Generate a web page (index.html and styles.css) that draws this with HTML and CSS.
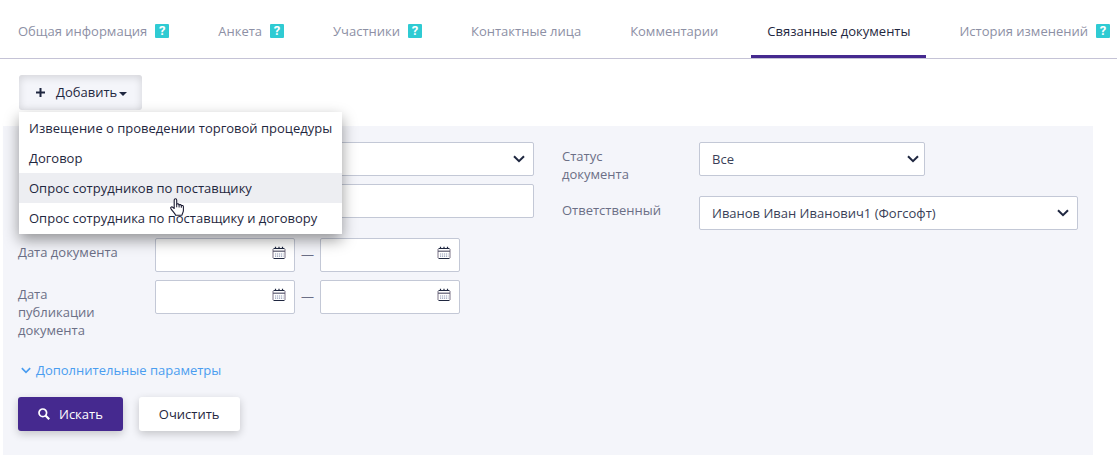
FILE: index.html
```html
<!DOCTYPE html>
<html lang="ru">
<head>
    <meta charset="UTF-8">
    <meta name="viewport" content="width=device-width, initial-scale=1.0">
    <title>Связанные документы</title>
    <link rel="stylesheet" href="styles.css">
</head>
<body>

    <!-- Shared icons -->
    <svg class="sprite" aria-hidden="true">
        <symbol id="chevron" viewBox="0 0 12 8">
            <path d="M1 1.2 L6 6.2 L11 1.2" fill="none" stroke="currentColor" stroke-width="2"/>
        </symbol>
        <symbol id="calendar" viewBox="0 0 14 14">
            <path d="M1 3V12M13 3V12" stroke="#7d7488" stroke-width="1"/>
            <path d="M1.5 2.5H12.5M1.5 12.5H12.5" stroke="#1f2740" stroke-width="1.2"/>
            <path d="M1 5.2H13" stroke="#5b5a70" stroke-width="1.2"/>
            <path d="M3.5 0.8V3M7 0.8V3M10.5 0.8V3" stroke="#1f2740" stroke-width="1.2"/>
            <path d="M3 8H11.5M3 10.2H11.5" stroke="#8f9ab5" stroke-width="1.2" stroke-dasharray="1.2 0.8"/>
        </symbol>
    </svg>

    <nav class="tabs">
        <a href="#" class="tab">Общая информация <span class="help">?</span></a>
        <a href="#" class="tab">Анкета <span class="help">?</span></a>
        <a href="#" class="tab">Участники <span class="help">?</span></a>
        <a href="#" class="tab">Контактные лица</a>
        <a href="#" class="tab">Комментарии</a>
        <a href="#" class="tab active">Связанные документы</a>
        <a href="#" class="tab">История изменений <span class="help">?</span></a>
    </nav>

    <div class="toolbar">
        <div class="dropdown">
            <button type="button" class="btn btn-add" aria-expanded="true">
                <svg class="plus" viewBox="0 0 9 9"><path d="M4.5 0V9M0 4.5H9" stroke="currentColor" stroke-width="2"/></svg>
                <span>Добавить</span>
                <span class="caret"></span>
            </button>
            <ul class="menu">
                <li><a href="#">Извещение о проведении торговой процедуры</a></li>
                <li><a href="#">Договор</a></li>
                <li><a href="#" class="hovered">Опрос сотрудников по поставщику</a></li>
                <li><a href="#">Опрос сотрудника по поставщику и договору</a></li>
            </ul>
            <svg class="pointer" viewBox="0 0 14 18" aria-hidden="true">
                <path d="M4.2 10.5V2.2C4.2 0.3 6.7 0.3 6.7 2.2V6.3C7.2 5.5 9 5.7 9.1 7C9.8 6.2 11.2 6.6 11.3 7.7C12.2 7.1 13.4 7.6 13.4 8.8V12.5C13.4 14.5 12.2 15.3 12 17.3H5.6C5.3 15.6 2.6 13.4 0.9 10.6C0.2 9.3 1.6 8.3 2.7 9.2Z" fill="#fff" stroke="#1c1c33" stroke-width="1.1" stroke-linejoin="round"/>
                <path d="M6.7 6V9.3M9.1 7V9.5M11.3 7.7V9.8" stroke="#1c1c33" stroke-width="1"/>
            </svg>
        </div>
    </div>

    <form class="filter" action="#" method="get">
        <div class="columns">
            <div class="column">
                <div class="row">
                    <div class="select field">
                        <select name="docType" aria-label="Тип документа"><option value=""></option></select>
                        <svg><use href="#chevron"/></svg>
                    </div>
                </div>
                <div class="row row-tall">
                    <input type="text" class="field" name="docNumber" aria-label="Номер документа">
                </div>
                <div class="row">
                    <label for="docDateFrom">Дата документа</label>
                    <div class="period field">
                        <div class="date">
                            <input type="text" id="docDateFrom" name="docDateFrom">
                            <svg><use href="#calendar"/></svg>
                        </div>
                        <span class="dash">—</span>
                        <div class="date">
                            <input type="text" name="docDateTo" aria-label="Дата документа по">
                            <svg><use href="#calendar"/></svg>
                        </div>
                    </div>
                </div>
                <div class="row">
                    <label for="pubDateFrom">Дата публикации документа</label>
                    <div class="period field">
                        <div class="date">
                            <input type="text" id="pubDateFrom" name="pubDateFrom">
                            <svg><use href="#calendar"/></svg>
                        </div>
                        <span class="dash">—</span>
                        <div class="date">
                            <input type="text" name="pubDateTo" aria-label="Дата публикации документа по">
                            <svg><use href="#calendar"/></svg>
                        </div>
                    </div>
                </div>
            </div>

            <div class="column">
                <div class="row">
                    <label for="status">Статус документа</label>
                    <div class="select select-short field">
                        <select id="status" name="status"><option>Все</option></select>
                        <svg><use href="#chevron"/></svg>
                    </div>
                </div>
                <div class="row">
                    <label for="owner">Ответственный</label>
                    <div class="select field">
                        <select id="owner" name="owner"><option>Иванов Иван Иванович1 (Фогсофт)</option></select>
                        <svg><use href="#chevron"/></svg>
                    </div>
                </div>
            </div>
        </div>

        <a href="#" class="more"><svg><use href="#chevron"/></svg>Дополнительные параметры</a>

        <div class="actions">
            <button type="submit" class="btn btn-search">
                <svg viewBox="0 0 12 12"><circle cx="4.8" cy="4.8" r="3.8" fill="none" stroke="currentColor" stroke-width="1.7"/><path d="M7.5 7.5L11.2 11.2" stroke="currentColor" stroke-width="2.2"/></svg>
                <span>Искать</span>
            </button>
            <button type="reset" class="btn btn-clear">Очистить</button>
        </div>
    </form>

</body>
</html>
```
FILE: styles.css
```css
* {
    box-sizing: border-box;
}

body {
    margin: 0;
    font-family: "Open Sans", sans-serif;
    font-size: 13px;
    line-height: 18px;
    color: #1f2740;
    background-color: #fff;
}

a {
    color: inherit;
    text-decoration: none;
}

.sprite {
    display: none;
}

/* tabs */
.tabs {
    display: flex;
    gap: 17px;
    height: 59px;
    padding: 0 2px;
    border-bottom: 1px solid #c5c3d6;
    overflow: hidden;
}

.tab {
    display: flex;
    align-items: center;
    flex-shrink: 0;
    gap: 8px;
    padding: 7px 16px 0;
    border-bottom: 3px solid transparent;
    color: #8d90a5;
    white-space: nowrap;
}

.tab.active {
    color: #1f2740;
    border-bottom-color: #45298f;
}

.help {
    width: 14px;
    height: 14px;
    border-radius: 1px;
    background-color: #2fcbd3;
    color: #fff;
    font-family: Roboto, sans-serif;
    font-size: 13px;
    font-weight: 700;
    line-height: 14px;
    text-align: center;
}

/* buttons */
.btn {
    display: flex;
    align-items: center;
    justify-content: center;
    height: 34px;
    border: none;
    border-radius: 3px;
    font: inherit;
    color: #1f2740;
    cursor: pointer;
}

.toolbar {
    padding: 16px 19px;
}

.dropdown {
    position: relative;
    width: max-content;
}

.btn-add {
    height: 35px;
    padding: 0 15px 1px 17px;
    background-color: #f4f5fa;
    box-shadow: inset 0 2px 8px rgba(0, 0, 0, 0.14);
}

.plus {
    width: 9px;
    height: 9px;
    margin-right: 11px;
}

.caret {
    margin: 3px 0 0 2px;
    border: 4px solid transparent;
    border-top-color: currentColor;
    border-bottom: 0;
}

.menu {
    position: absolute;
    top: 37px;
    left: 0;
    z-index: 10;
    margin: 0;
    padding: 1px 0;
    list-style: none;
    background-color: #fff;
    box-shadow: 0 6px 14px rgba(0, 0, 0, 0.4);
}

.menu a {
    display: block;
    padding: 6px 10px;
    white-space: nowrap;
}

.menu a:hover,
.menu a.hovered {
    background-color: #edeef2;
}

.pointer {
    position: absolute;
    top: 123px;
    left: 151px;
    z-index: 11;
    width: 14px;
    height: 18px;
}

/* filter */
.filter {
    margin: 0 24px 12px 3px;
    padding: 16px 15px 24px;
    background-color: #f4f5fa;
}

.columns {
    display: grid;
    grid-template-columns: 1fr 1fr;
    gap: 28px;
}

.column {
    display: flex;
    flex-direction: column;
    gap: 8px;
}

.row {
    display: grid;
    grid-template-columns: 107px 1fr;
    gap: 30px;
    align-items: start;
}

.row-tall {
    min-height: 46px;
}

.row label {
    padding: 5px 0;
    color: #6b6f86;
}

.field {
    grid-column: 2;
}

input,
select {
    display: block;
    width: 100%;
    height: 34px;
    padding: 0 12px 1px;
    border: 1px solid #c3c8d6;
    border-radius: 2px;
    background-color: #fff;
    font: inherit;
    color: #3a3f58;
    appearance: none;
}

.select,
.date {
    position: relative;
}

.select svg {
    position: absolute;
    top: 13px;
    right: 9px;
    width: 12px;
    height: 8px;
    color: #1f2740;
    pointer-events: none;
}

.select-short {
    width: 226px;
}

.select-short svg {
    right: 6px;
}

.period {
    display: flex;
    align-items: center;
}

.date {
    width: 140px;
}

.date svg {
    position: absolute;
    top: 8px;
    right: 9px;
    width: 14px;
    height: 14px;
}

.dash {
    width: 25px;
    padding-bottom: 2px;
    color: #6b6f86;
    text-align: center;
}

.more {
    display: flex;
    align-items: center;
    gap: 5px;
    width: max-content;
    margin: 17px 0 18px 3px;
    color: #4a9df0;
}

.more svg {
    width: 10px;
    height: 7px;
}

.actions {
    display: flex;
    gap: 16px;
}

.btn-search {
    gap: 9px;
    padding: 0 20px;
    background-color: #45298f;
    color: #fff;
    box-shadow: 0 3px 8px rgba(0, 0, 0, 0.2);
}

.btn-search svg {
    width: 12px;
    height: 12px;
}

.btn-clear {
    padding: 0 20px;
    background-color: #fff;
    box-shadow: 0 3px 8px rgba(0, 0, 0, 0.2);
}
```
